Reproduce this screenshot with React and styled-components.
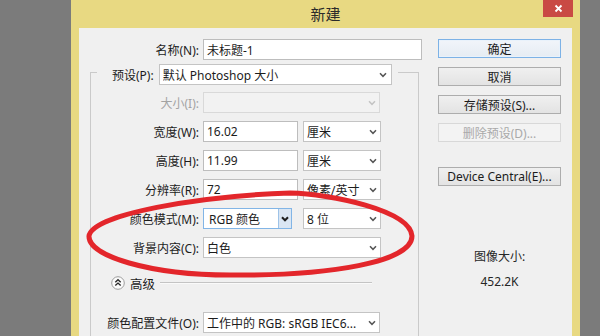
import React from "react";
import styled, { createGlobalStyle, css } from "styled-components";

const Global = createGlobalStyle`
  html, body { margin: 0; padding: 0; }
  body {
    width: 600px; height: 336px; overflow: hidden; background: #7b7b7b;
    font-family: "Noto Sans", "Noto Sans CJK SC", sans-serif;
  }
`;

const Stage = styled.div`
  position: relative;
  width: 600px;
  height: 336px;
  overflow: hidden;
  display: flex;
  background: #7b7b7b;
`;

const Backdrop = styled.div`
  width: 71px;
  flex: none;
`;

const Window = styled.div`
  width: 509px;
  flex: none;
  box-sizing: border-box;
  background: #e8d982;
  padding: 0 8px;
  display: flex;
  flex-direction: column;
`;

const TitleBar = styled.div`
  height: 28px;
  flex: none;
  display: grid;
  grid-template-columns: 1fr auto 1fr;
  align-items: center;
`;

const Title = styled.div`
  grid-column: 2;
  font-family: "Noto Sans CJK SC", sans-serif;
  font-size: 15px;
  color: #2b2b2b;
  padding-bottom: 1px;
`;

const CloseBtn = styled.div`
  grid-column: 3;
  justify-self: end;
  align-self: start;
  width: 30px;
  height: 17px;
  margin-right: -1px;
  background: #c94a44;
  display: flex;
  align-items: center;
  justify-content: center;
`;

const Content = styled.div`
  flex: 1;
  background: #f0f0f0;
  display: flex;
  padding: 11px 11px 0 11px;
  font-size: 12px;
  color: #1c1c1c;
`;

const LeftCol = styled.div`
  width: 336px;
  flex: none;
  display: flex;
  flex-direction: column;
`;

const RightCol = styled.div`
  width: 123px;
  margin-left: 12px;
  flex: none;
  display: flex;
  flex-direction: column;
  gap: 9px;
`;

const Row = styled.div`
  display: flex;
  align-items: center;
  height: 21px;
`;

const Label = styled.div`
  width: ${(p) => p.$w || 108}px;
  flex: none;
  text-align: right;
  margin-right: 4px;
  white-space: nowrap;
  color: ${(p) => (p.$disabled ? "#a3a3a3" : "#1c1c1c")};
`;

const fieldBase = css`
  box-sizing: border-box;
  height: 21px;
  flex: none;
  display: flex;
  align-items: center;
  white-space: nowrap;
  overflow: hidden;
`;

const TextInput = styled.div`
  ${fieldBase};
  width: ${(p) => p.$w}px;
  background: #fff;
  border: 1px solid #bdbdbd;
  padding-left: 3px;
`;

const SelectBox = styled.div`
  ${fieldBase};
  width: ${(p) => p.$w}px;
  margin-left: ${(p) => p.$ml || 0}px;
  background: ${(p) => (p.$disabled ? "#f2f2f2" : "#fff")};
  border: 1px solid ${(p) => (p.$focus ? "#82b5e6" : p.$disabled ? "#d9d9d9" : "#c4c4c4")};
  padding-left: ${(p) => (p.$focus ? 5 : 3)}px;
`;

const SelectText = styled.span`
  flex: 1;
  overflow: hidden;
`;

const Arrow = styled.span`
  width: ${(p) => (p.$focus ? 12 : 15)}px;
  align-self: stretch;
  flex: none;
  display: flex;
  align-items: center;
  justify-content: center;
  background: ${(p) => (p.$focus ? "#dae6f3" : "transparent")};
  border-left: ${(p) => (p.$focus ? "1px solid #9ec3e8" : "none")};
`;

const Chevron = ({ color = "#4d4d4d", w = 1.5 }) => (
  <svg width="8" height="6" viewBox="0 0 8 6">
    <polyline points="1,1.2 4,4.3 7,1.2" fill="none" stroke={color} strokeWidth={w} />
  </svg>
);

const Select = ({ w, ml, focus, disabled, children }) => (
  <SelectBox $w={w} $ml={ml} $focus={focus} $disabled={disabled}>
    <SelectText>{children}</SelectText>
    <Arrow $focus={focus}>
      <Chevron color={disabled ? "#c4c4c4" : focus ? "#1e1e1e" : "#555"} w={focus ? 2 : 1.5} />
    </Arrow>
  </SelectBox>
);

const Group = styled.fieldset`
  box-sizing: border-box;
  width: 329px;
  margin: -1px 0 0 0;
  padding: 7px 0 30px 0;
  border: 1px solid #cacaca;
  min-width: 0;
  display: flex;
  flex-direction: column;
  gap: 8px;
`;

const Legend = styled.legend`
  margin-left: 6px;
  padding: 5px 6px 0 15px;
`;

const LegendInner = styled.div`
  display: flex;
  align-items: center;
  height: 21px;
`;

const LegendLabel = styled.span`
  margin-right: 5px;
  white-space: nowrap;
`;

const AdvRow = styled.div`
  display: flex;
  align-items: center;
  height: 14px;
  margin-top: 10px;
  padding-left: 20px;
  margin-right: 46px;
`;

const AdvText = styled.span`
  margin: 0 5px 0 5px;
  font-size: 12.5px;
`;

const Rule = styled.div`
  flex: 1;
  height: 1px;
  background: #c4c4c4;
  border-bottom: 1px solid #fafafa;
`;

const ProfileRow = styled(Row)`
  margin-top: 14px;
`;

const Button = styled.div`
  box-sizing: border-box;
  height: 19px;
  display: flex;
  align-items: center;
  justify-content: center;
  font-size: 12px;
  white-space: nowrap;
  margin-top: ${(p) => p.$mt || 0}px;
  color: ${(p) => (p.$disabled ? "#a9a9a9" : "#1c1c1c")};
  border: 1px solid ${(p) => (p.$primary ? "#7db2e6" : p.$disabled ? "#d8d8d8" : "#adadad")};
  background: ${(p) =>
    p.$disabled
      ? "#f3f3f3"
      : p.$primary
      ? "linear-gradient(#f1f5fa, #e6ecf3)"
      : "linear-gradient(#f0f0f0, #e3e3e3)"};
  box-shadow: ${(p) => (p.$primary ? "inset 0 0 0 1px #e9f2fb" : "none")};
`;

const Info = styled.div`
  margin-top: 54px;
  display: flex;
  flex-direction: column;
  align-items: center;
  gap: 9px;
  font-size: 12px;
  line-height: 16px;
  color: #262626;
`;

const Overlay = styled.svg`
  position: absolute;
  left: 0;
  top: 0;
  pointer-events: none;
`;

const AdvIcon = () => (
  <svg width="14" height="14" viewBox="0 0 14 14">
    <circle cx="7" cy="7" r="6.3" fill="#fbfbfb" stroke="#9d9d9d" strokeWidth="1" />
    <polyline points="4.3,6.3 7,3.8 9.7,6.3" fill="none" stroke="#2a2a2a" strokeWidth="1.4" />
    <polyline points="4.3,9.6 7,7.1 9.7,9.6" fill="none" stroke="#2a2a2a" strokeWidth="1.4" />
  </svg>
);

export default function App() {
  return (
    <>
      <Global />
      <Stage>
        <Backdrop />
        <Window>
          <TitleBar>
            <Title>新建</Title>
            <CloseBtn>
              <svg width="9" height="9" viewBox="0 0 9 9">
                <path d="M1.5 1.5 L7.5 7.5 M7.5 1.5 L1.5 7.5" stroke="#fff" strokeWidth="1.8" />
              </svg>
            </CloseBtn>
          </TitleBar>
          <Content>
            <LeftCol>
              <Row>
                <Label $w={109}>名称(N):</Label>
                <TextInput $w={219}>未标题-1</TextInput>
              </Row>
              <Group>
                <Legend>
                  <LegendInner>
                    <LegendLabel>预设(P):</LegendLabel>
                    <Select w={233}>默认 Photoshop 大小</Select>
                  </LegendInner>
                </Legend>
                <Row>
                  <Label $disabled>大小(I):</Label>
                  <Select w={177} disabled></Select>
                </Row>
                <Row>
                  <Label>宽度(W):</Label>
                  <TextInput $w={95}>16.02</TextInput>
                  <Select w={78} ml={5}>厘米</Select>
                </Row>
                <Row>
                  <Label>高度(H):</Label>
                  <TextInput $w={95}>11.99</TextInput>
                  <Select w={78} ml={5}>厘米</Select>
                </Row>
                <Row>
                  <Label>分辨率(R):</Label>
                  <TextInput $w={95}>72</TextInput>
                  <Select w={78} ml={5}>像素/英寸</Select>
                </Row>
                <Row>
                  <Label>颜色模式(M):</Label>
                  <Select w={89} focus>RGB 颜色</Select>
                  <Select w={78} ml={11}>8 位</Select>
                </Row>
                <Row>
                  <Label>背景内容(C):</Label>
                  <Select w={178}>白色</Select>
                </Row>
                <AdvRow>
                  <AdvIcon />
                  <AdvText>高级</AdvText>
                  <Rule />
                </AdvRow>
                <ProfileRow>
                  <Label>颜色配置文件(O):</Label>
                  <Select w={177}>工作中的 RGB: sRGB IEC6...</Select>
                </ProfileRow>
              </Group>
            </LeftCol>
            <RightCol>
              <Button $primary>确定</Button>
              <Button>取消</Button>
              <Button>存储预设(S)...</Button>
              <Button $disabled>删除预设(D)...</Button>
              <Button $mt={16}>Device Central(E)...</Button>
              <Info>
                <span>图像大小:</span>
                <span>452.2K</span>
              </Info>
            </RightCol>
          </Content>
        </Window>
        <Backdrop />
        <Overlay width="600" height="336" viewBox="0 0 600 336">
          <path
            d="M 89 236 C 92 214, 200 196, 290 193 C 330 194, 410 210, 412 236 C 412 262, 330 276, 230 275 C 150 275, 88 256, 89 236 Z"
            fill="none"
            stroke="#e3262b"
            strokeWidth="5"
            strokeLinejoin="round"
          />
        </Overlay>
      </Stage>
    </>
  );
}
